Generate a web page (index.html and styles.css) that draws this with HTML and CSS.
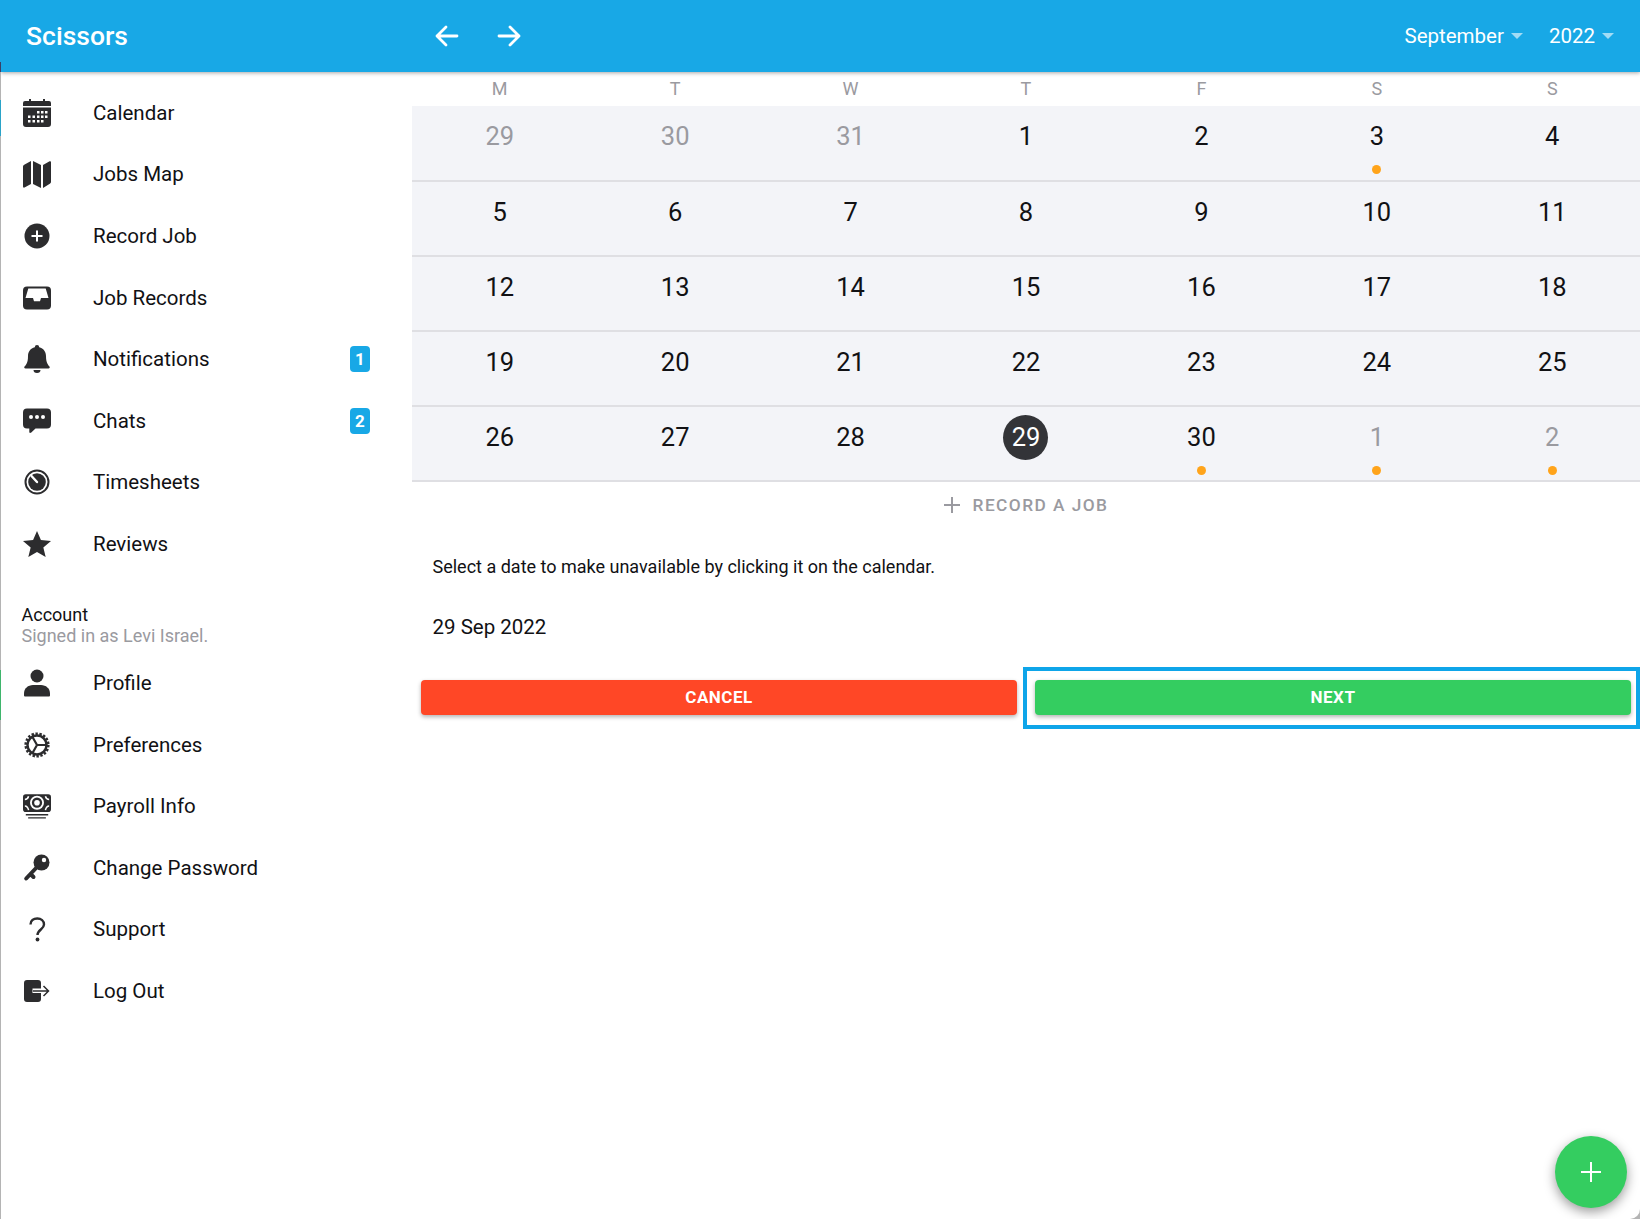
FILE: index.html
```html
<!DOCTYPE html>
<html lang="en">
<head>
<meta charset="utf-8">
<title>Scissors</title>
<link rel="stylesheet" href="styles.css">
</head>
<body>
<div class="app">
  <header class="topbar">
    <div class="brand">Scissors</div>
    <nav class="arrows">
      <svg class="arrow" viewBox="0 0 24 22"><path d="M22 11H2M11 2 2 11l9 9"/></svg>
      <svg class="arrow" viewBox="0 0 24 22"><path d="M2 11h20M13 2l9 9-9 9"/></svg>
    </nav>
    <div class="pickers">
      <div class="picker"><span>September</span><i class="caret"></i></div>
      <div class="picker"><span>2022</span><i class="caret"></i></div>
    </div>
  </header>
  <div class="body">
    <aside class="sidebar">
      <ul class="menu">
        <li class="item"><svg class="icon" viewBox="0 0 28 28"><path d="M6 0h2v3H6zM20 0h2v3h-2z"/><path d="M2 2h24a2 2 0 0 1 2 2v3H0V4a2 2 0 0 1 2-2zM0 8.500h28V25a3 3 0 0 1-3 3H3a3 3 0 0 1-3-3z"/><g fill="#fff"><rect x="14" y="12" width="2.500" height="2.500"/><rect x="18" y="12" width="2.500" height="2.500"/><rect x="22" y="12" width="2.500" height="2.500"/><rect x="5" y="16.500" width="2.500" height="2.500"/><rect x="9.500" y="16.500" width="2.500" height="2.500"/><rect x="14" y="16.500" width="2.500" height="2.500"/><rect x="18" y="16.500" width="2.500" height="2.500"/><rect x="22" y="16.500" width="2.500" height="2.500"/><rect x="5" y="21" width="2.500" height="2.500"/><rect x="9.500" y="21" width="2.500" height="2.500"/><rect x="14" y="21" width="2.500" height="2.500"/><rect x="18" y="21" width="2.500" height="2.500"/></g></svg><span>Calendar</span></li>
        <li class="item"><svg class="icon" viewBox="0 0 28 28"><path d="M0 6.500a2 2 0 0 1 1.200-1.800L8 1v23l-6.500 3.500Q0 28 0 26.500zM10 1l8 4v23l-8-4zM20 5l6.600-3.700Q28 .8 28 2.200V22a2 2 0 0 1-1.200 1.700L20 28z"/></svg><span>Jobs Map</span></li>
        <li class="item"><svg class="icon" viewBox="0 0 28 28"><circle cx="14" cy="14" r="12.500"/><path d="M14 8.500v11M8.500 14h11" stroke="#fff" stroke-width="2" fill="none"/></svg><span>Record Job</span></li>
        <li class="item"><svg class="icon" viewBox="0 0 28 28"><rect x="0" y="2.500" width="28" height="23" rx="4"/><path fill="#fff" d="M5.300 4.500h17.400l2.800 9.500H18l-1 3.200h-6L10 14H2.500z"/></svg><span>Job Records</span></li>
        <li class="item"><svg class="icon" viewBox="0 0 28 28"><path d="M14 0a2.200 2.200 0 0 1 2.200 2.200C20.500 3.200 23 6.800 23 11c0 7 2.200 9 3.500 10.500.6.800.2 2-1 2h-23c-1.200 0-1.600-1.200-1-2C3 20 5 18 5 11c0-4.200 2.500-7.800 6.800-8.800A2.200 2.200 0 0 1 14 0zM10.500 25h7a3.500 3 0 0 1-7 0z"/></svg><span>Notifications</span><b class="badge">1</b></li>
        <li class="item"><svg class="icon" viewBox="0 0 28 28"><path d="M4 1.500h20a4 4 0 0 1 4 4v12a4 4 0 0 1-4 4H12.500l-4.200 4q-1.800 1-2-.5v-3.500H4a4 4 0 0 1-4-4v-12a4 4 0 0 1 4-4z"/><g fill="#fff"><circle cx="8" cy="10" r="2"/><circle cx="14" cy="10" r="2"/><circle cx="20" cy="10" r="2"/></g></svg><span>Chats</span><b class="badge">2</b></li>
        <li class="item"><svg class="icon" viewBox="0 0 28 28"><circle cx="14" cy="14" r="11.500" fill="none" stroke="#2c2c2e" stroke-width="2"/><circle cx="14" cy="14" r="8.800"/><path d="M14 14 8.500 8" stroke="#fff" stroke-width="2.400" stroke-linecap="round"/></svg><span>Timesheets</span></li>
        <li class="item"><svg class="icon" viewBox="0 0 30 28"><path d="m15 0 4.200 9.700 10.800 1-8.200 7 2.500 10.300L15 22.500 5.700 28l2.500-10.300-8.200-7 10.800-1z"/></svg><span>Reviews</span></li>
      </ul>
      <div class="account">
        <div class="account-title">Account</div>
        <div class="account-sub">Signed in as Levi Israel.</div>
      </div>
      <ul class="menu">
        <li class="item"><svg class="icon" viewBox="0 0 28 28"><circle cx="14" cy="7" r="6.500"/><path d="M2 27.500a1 1 0 0 1-1-1v-2c0-5 4-8.500 9-8.500h8c5 0 9 3.500 9 8.500v2a1 1 0 0 1-1 1z"/></svg><span>Profile</span></li>
        <li class="item"><svg class="icon" viewBox="0 0 28 28"><circle cx="14" cy="14" r="9.500" fill="none" stroke="#2c2c2e" stroke-width="2.400"/><circle cx="14" cy="14" r="11.300" fill="none" stroke="#2c2c2e" stroke-width="2.600" stroke-dasharray="2.400 1.550"/><path d="M14 14H23M14 14 9.500 6M14 14 9.500 22" stroke="#2c2c2e" stroke-width="2.200" fill="none"/></svg><span>Preferences</span></li>
        <li class="item"><svg class="icon" viewBox="0 0 30 28"><path d="M3 1.500h24a3 3 0 0 1 3 3v13a3 3 0 0 1-3 3H3a3 3 0 0 1-3-3v-13a3 3 0 0 1 3-3z"/><circle cx="15" cy="10.500" r="7.500" fill="#fff"/><circle cx="15" cy="10.500" r="5.500"/><circle cx="15" cy="10.500" r="3" fill="#fff"/><path d="M2 7q3 0 4-3.500M28 7q-3 0-4-3.500M2 14q3 0 4 4.500M28 14q-3 0-4 4.500" fill="none" stroke="#fff" stroke-width="1.600"/><path d="M3 22.500h24v1.800H3zM5.500 26h19v1.500h-19z"/></svg><span>Payroll Info</span></li>
        <li class="item"><svg class="icon" viewBox="0 0 28 28"><circle cx="18.500" cy="8.500" r="8"/><path d="M15 12 3.200 24.500M7.500 20l3 3" stroke="#2c2c2e" stroke-width="4" fill="none" stroke-linecap="round"/><circle cx="21" cy="6" r="2.200" fill="#fff"/></svg><span>Change Password</span></li>
        <li class="item"><svg class="icon" viewBox="0 0 28 28"><path d="M7.500 9.500C7.500 5.500 10.500 3.500 14.300 3.500S21 6 21 9.500c0 4.800-6.500 5.300-6.500 10.500" fill="none" stroke="#2c2c2e" stroke-width="2.400"/><circle cx="14.500" cy="24.500" r="1.900"/></svg><span>Support</span></li>
        <li class="item"><svg class="icon" viewBox="0 0 28 28"><path d="M4 3h11a3 3 0 0 1 3 3v5.500H9.500v4.500H18v6a3 3 0 0 1-3 3H4a3 3 0 0 1-3-3V6a3 3 0 0 1 3-3z"/><path d="M10 14h15.500M20.500 9l5 5-5 5" fill="none" stroke="#2c2c2e" stroke-width="1.500"/></svg><span>Log Out</span></li>
      </ul>
    </aside>
    <main class="content">
      <div class="weekdays">
        <div>M</div><div>T</div><div>W</div><div>T</div><div>F</div><div>S</div><div>S</div>
      </div>
      <div class="month">
        <div class="week">
          <div class="day muted">29</div><div class="day muted">30</div><div class="day muted">31</div><div class="day">1</div><div class="day">2</div><div class="day has-dot">3</div><div class="day">4</div>
        </div>
        <div class="week">
          <div class="day">5</div><div class="day">6</div><div class="day">7</div><div class="day">8</div><div class="day">9</div><div class="day">10</div><div class="day">11</div>
        </div>
        <div class="week">
          <div class="day">12</div><div class="day">13</div><div class="day">14</div><div class="day">15</div><div class="day">16</div><div class="day">17</div><div class="day">18</div>
        </div>
        <div class="week">
          <div class="day">19</div><div class="day">20</div><div class="day">21</div><div class="day">22</div><div class="day">23</div><div class="day">24</div><div class="day">25</div>
        </div>
        <div class="week">
          <div class="day">26</div><div class="day">27</div><div class="day">28</div><div class="day today"><span>29</span></div><div class="day has-dot">30</div><div class="day muted has-dot">1</div><div class="day muted has-dot">2</div>
        </div>
      </div>
      <div class="record"><svg class="record-plus" viewBox="0 0 16 16"><path d="M8 0v16M0 8h16"/></svg><span>RECORD A JOB</span></div>
      <p class="hint">Select a date to make unavailable by clicking it on the calendar.</p>
      <p class="date">29 Sep 2022</p>
      <div class="actions">
        <div class="action"><button class="btn btn-cancel">CANCEL</button></div>
        <div class="action-focus"><button class="btn btn-next">NEXT</button></div>
      </div>
    </main>
  </div>
  <button class="fab"><svg viewBox="0 0 20 20"><path d="M10 0v20M0 10h20"/></svg></button>
</div>
</body>
</html>
```
FILE: styles.css
```css
* { box-sizing: border-box; }
html, body { margin: 0; height: 100%; }
body {
  font-family: Roboto, "Liberation Sans", sans-serif;
  color: #111114;
  background: linear-gradient(to bottom, #18a8e6 0, #18a8e6 62px, #3a3f66 62px, #3a3f66 72px, #b4b4b4 72px, #b4b4b4 100px, #2aa3c8 100px, #2aa3c8 136px, #b4b4b4 136px, #b4b4b4 670px, #3fb56c 670px, #3fb56c 720px, #b4b4b4 720px);
  overflow: hidden;
}
.app {
  position: relative;
  height: 1219px;
  margin-left: 1px;
  background: #fff;
  border-bottom-right-radius: 10px;
  display: flex;
  flex-direction: column;
  overflow: hidden;
}
.topbar {
  height: 72px;
  flex: none;
  background: #18a8e6;
  color: #fff;
  display: flex;
  align-items: center;
  box-shadow: 0 1px 4px rgba(0,0,0,.35);
  position: relative;
  z-index: 2;
}
.brand {
  width: 434px;
  padding-left: 25px;
  font-size: 26.5px;
  line-height: 31px;
  padding-bottom: 1px;
  font-weight: 500;
}
.arrows { display: flex; gap: 38px; }
.arrow { width: 24px; height: 22px; fill: none; stroke: #fff; stroke-width: 2.8; stroke-linecap: round; stroke-linejoin: round; }
.pickers { margin-left: auto; display: flex; gap: 26px; padding-right: 26px; font-size: 20.5px; }
.picker { display: flex; align-items: center; gap: 7px; }
.caret { width: 0; height: 0; border-left: 6px solid transparent; border-right: 6px solid transparent; border-top: 6px solid rgba(255,255,255,.6); }
.body { flex: 1; display: flex; min-height: 0; }
.sidebar { width: 411px; flex: none; padding-top: 10px; }
.menu { list-style: none; margin: 0; padding: 0; }
.item {
  height: 61.6px;
  display: flex;
  align-items: center;
  padding-left: 22px;
  font-size: 20.5px;
}
.icon { width: 28px; height: 28px; fill: #2c2c2e; flex: none; margin-right: 42px; }
.item span { flex: 1; }
.badge {
  width: 20px;
  height: 26px;
  margin-right: 42px;
  border-radius: 4px;
  background: #18a8e6;
  color: #fff;
  font-size: 17px;
  font-weight: 700;
  display: flex;
  align-items: center;
  justify-content: center;
}
.account { padding: 29px 0 6.5px 20.5px; font-size: 18px; line-height: 21px; }
.account-sub { color: #9a9aa0; }
.content { flex: 1; min-width: 0; display: flex; flex-direction: column; }
.weekdays {
  height: 34px;
  padding-bottom: 2px;
  display: grid;
  grid-template-columns: repeat(7, 1fr);
  align-items: center;
  text-align: center;
  font-size: 18px;
  color: #9a9aa0;
}
.month { background: #f3f4f8; }
.week {
  height: 75px;
  display: grid;
  grid-template-columns: repeat(7, 1fr);
  border-bottom: 2px solid #dfdfe3;
}
.week:first-child { height: 76px; }
.day {
  position: relative;
  text-align: center;
  font-size: 25.5px;
  line-height: 29px;
  padding-top: 15.500px;
}
.muted { color: #9a9aa0; }
.has-dot::after {
  content: "";
  position: absolute;
  left: 50%;
  top: 58.500px;
  width: 9px;
  height: 9px;
  margin-left: -4.5px;
  border-radius: 50%;
  background: #ffa41b;
}
.today span {
  display: block;
  width: 45px;
  height: 45px;
  margin: -8px auto 0;
  border-radius: 50%;
  background: #333438;
  color: #fff;
  line-height: 45px;
}
.record {
  height: 46px;
  display: flex;
  align-items: center;
  justify-content: center;
  gap: 13px;
  font-size: 17.3px;
  font-weight: 500;
  letter-spacing: 1.45px;
  color: #9a9aa0;
}
.record-plus { width: 16px; height: 16px; fill: none; stroke: #9a9aa0; stroke-width: 2; }
.hint { margin: 28px 0 0 20.5px; font-size: 18px; line-height: 22px; }
.date { margin: 36.5px 0 0 20.5px; font-size: 20.5px; line-height: 24px; }
.actions { display: flex; align-items: flex-start; margin-top: 28px; }
.action { flex: 0 0 611px; padding: 13px 6px 0 9px; }
.action-focus { flex: 1; border: 4px solid #0ea5e9; padding: 9px 5px 10px 8px; }
.btn {
  display: block;
  width: 100%;
  height: 35px;
  border: 0;
  border-radius: 4px;
  color: #fff;
  font: 700 17px Roboto, sans-serif;
  letter-spacing: .5px;
  box-shadow: 0 2px 4px rgba(0,0,0,.3);
}
.btn-cancel { background: #ff4726; }
.btn-next { background: #34cd60; }
.fab {
  position: absolute;
  left: 1554px;
  top: 1136px;
  width: 72px;
  height: 72px;
  border: 0;
  border-radius: 50%;
  background: #34cd60;
  box-shadow: 0 4px 12px rgba(0,0,0,.4);
  display: flex;
  align-items: center;
  justify-content: center;
}
.fab svg { width: 20px; height: 20px; fill: none; stroke: #fff; stroke-width: 2; }
```
